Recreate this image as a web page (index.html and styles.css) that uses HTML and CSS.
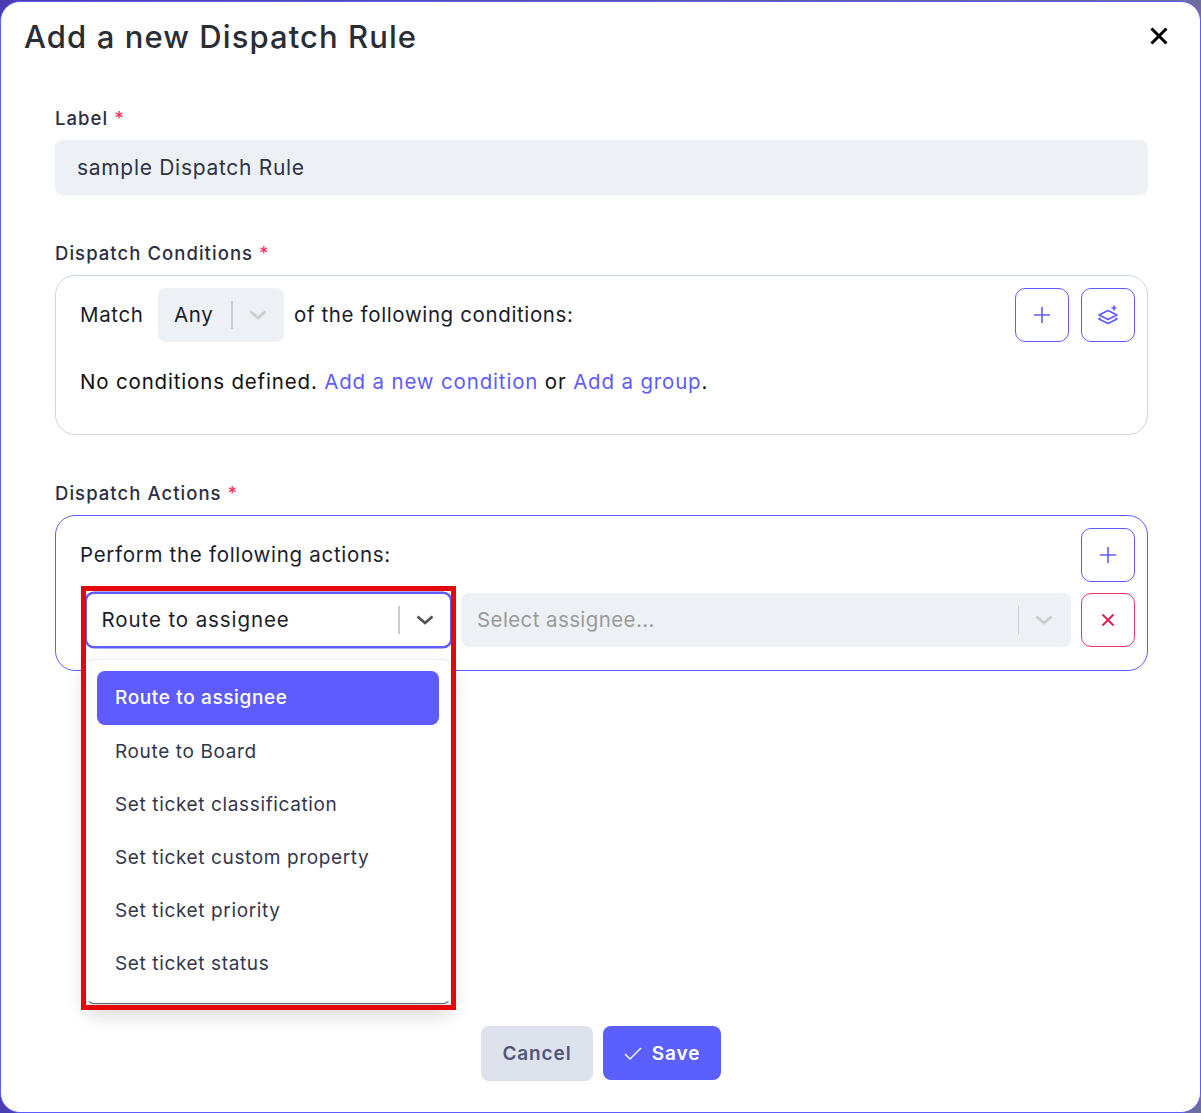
FILE: index.html
```html
<!DOCTYPE html>
<html lang="en">
<head>
<meta charset="utf-8">
<title>Add a new Dispatch Rule</title>
<link rel="stylesheet" href="styles.css">
</head>
<body>
<div class="modal">
  <header class="modal-head">
    <h1 class="title">Add a new Dispatch Rule</h1>
    <button class="close" aria-label="Close">
      <svg width="18" height="18" viewBox="0 0 18 18"><path d="M1.5 1.5l15 15M16.5 1.5l-15 15" stroke="#000" stroke-width="3" fill="none"/></svg>
    </button>
  </header>
  <div class="modal-body">
    <section class="field field-label">
      <div class="label">Label <span class="req">*</span></div>
      <div class="input">sample Dispatch Rule</div>
    </section>
    <section class="field field-cond">
      <div class="label">Dispatch Conditions <span class="req">*</span></div>
      <div class="box box-cond">
        <div class="row-head">
          <span class="match">Match</span>
          <div class="select select-any">
            <span class="sel-text">Any</span>
            <i class="sep"></i>
            <svg class="chev" width="18" height="10" viewBox="0 0 18 10"><path d="M1.5 1.5L9 8l7.5-6.5" stroke="#cccccc" stroke-width="2.8" fill="none"/></svg>
          </div>
          <span class="of">of the following conditions:</span>
          <div class="tools">
            <button class="icon-btn">
              <svg width="16" height="16" viewBox="0 0 16 16"><path d="M8 0v16M0 8h16" stroke="#5f5cff" stroke-width="1.6" fill="none"/></svg>
            </button>
            <button class="icon-btn">
              <svg width="22" height="22" viewBox="0 0 22 22" fill="none" stroke="#5f5cff" stroke-width="1.7" stroke-linejoin="round"><path d="M11 6.5L20 11l-9 4.5L2 11z"/><path d="M3.5 14L2 15l9 4.5 9-4.5-1.5-1"/><path d="M17 1.5v5M14.5 4h5"/></svg>
            </button>
          </div>
        </div>
        <p class="empty">No conditions defined. <a href="#">Add a new condition</a> or <a href="#">Add a group</a>.</p>
      </div>
    </section>
    <section class="field field-act">
      <div class="label">Dispatch Actions <span class="req">*</span></div>
      <div class="box box-act">
        <div class="row-perform">
          <span class="perform">Perform the following actions:</span>
          <button class="icon-btn">
            <svg width="16" height="16" viewBox="0 0 16 16"><path d="M8 0v16M0 8h16" stroke="#5f5cff" stroke-width="1.6" fill="none"/></svg>
          </button>
        </div>
        <div class="row-action">
          <div class="combo">
            <div class="select select-open">
              <span class="sel-text">Route to assignee</span>
              <i class="sep"></i>
              <svg class="chev" width="18" height="10" viewBox="0 0 18 10"><path d="M1.5 1.5L9 8l7.5-6.5" stroke="#555555" stroke-width="2.8" fill="none"/></svg>
            </div>
            <ul class="menu">
              <li class="opt active">Route to assignee</li>
              <li class="opt">Route to Board</li>
              <li class="opt">Set ticket classification</li>
              <li class="opt">Set ticket custom property</li>
              <li class="opt">Set ticket priority</li>
              <li class="opt">Set ticket status</li>
            </ul>
            <div class="highlight"></div>
          </div>
          <div class="select select-assignee">
            <span class="sel-text placeholder">Select assignee...</span>
            <i class="sep"></i>
            <svg class="chev" width="18" height="10" viewBox="0 0 18 10"><path d="M1.5 1.5L9 8l7.5-6.5" stroke="#cccccc" stroke-width="2.8" fill="none"/></svg>
          </div>
          <button class="icon-btn danger">
            <svg width="14" height="14" viewBox="0 0 14 14"><path d="M1.5 1.5l11 11M12.5 1.5l-11 11" stroke="#e0194f" stroke-width="1.8" fill="none"/></svg>
          </button>
        </div>
      </div>
    </section>
  </div>
  <footer class="modal-foot">
    <button class="btn btn-cancel">Cancel</button>
    <button class="btn btn-save">
      <svg width="18" height="13" viewBox="0 0 18 13"><path d="M1 7l5 5L17 1" stroke="#fff" stroke-width="1.4" fill="none"/></svg>
      Save
    </button>
  </footer>
</div>
</body>
</html>
```
FILE: styles.css
```css
* { box-sizing: border-box; }
html, body { margin: 0; padding: 0; }
body {
  width: 1201px;
  height: 1113px;
  overflow: hidden;
  background: linear-gradient(90deg, #4a3db4 0%, #5c55a8 50%, #6d6c9c 100%);
  font-family: Inter, "Noto Sans", sans-serif;
  color: #2a2d3e;
}
.modal {
  height: 1112px;
  margin-top: 1px;
  background: #fff;
  border: 1px solid #5f5cff;
  border-radius: 20px;
  display: flex;
  flex-direction: column;
}
.modal-head {
  height: 68px;
  display: flex;
  align-items: center;
  justify-content: space-between;
  padding: 0 32px 0 23px;
}
.title {
  margin: 0;
  font-size: 31px;
  font-weight: 450;
  letter-spacing: 1.08px;
  color: #2a2d34;
}
.close {
  border: 0;
  background: none;
  padding: 0;
  display: flex;
}
.modal-body {
  flex: 1;
  padding: 36px 52px 0 54px;
}
.field { display: flex; flex-direction: column; }
.label {
  font-size: 18.5px;
  line-height: 24px;
  font-weight: 450;
  letter-spacing: 1.05px;
  height: 34px;
  color: #2c2e42;
}
.req { color: #f5356a; }
.input {
  height: 55px;
  background: #edf1f5;
  border-radius: 8px;
  padding: 0 22px;
  display: flex;
  align-items: center;
  font-size: 21px;
  letter-spacing: 0.7px;
  color: #2f3247;
}
.field-cond { margin-top: 46px; }
.field-act { margin-top: 46px; }
.box {
  border: 1px solid #ccd5de;
  border-radius: 20px;
  font-size: 20.5px;
  letter-spacing: 0.63px;
  color: #1b1d2b;
}
.box-cond { height: 160px; padding: 12px 12px 0 24px; }
.box-act { height: 156px; padding: 12px 12px 0 24px; border-color: #5f5cff; }
.row-head { display: flex; align-items: center; height: 54px; }
.match { width: 78px; flex: none; margin-top: -1px; }
.select {
  display: flex;
  align-items: center;
  height: 54px;
  background: #edf1f5;
  border-radius: 8px;
}
.sel-text { margin-top: -1px; }
.select-any { width: 126px; padding-left: 16px; }
.select-any .sel-text { width: 57px; }
.sep { display: block; width: 1.5px; height: 28px; background: #cccccc; flex: none; }
.chev { flex: none; margin-left: 16px; }
.of { margin-left: 10px; margin-top: -1px; }
.tools { margin-left: auto; display: flex; gap: 12px; }
.icon-btn {
  width: 54px;
  height: 54px;
  padding: 0;
  background: #fff;
  border: 1.2px solid #5f5cff;
  border-radius: 10px;
  display: flex;
  align-items: center;
  justify-content: center;
  flex: none;
}
.icon-btn.danger { border-color: #f0305e; }
.empty { margin: 13px 0 0; line-height: 54px; height: 54px; font-weight: 400; letter-spacing: 0.83px; color: #111; }
.empty a { color: #5f5cff; text-decoration: none; }
.row-perform { display: flex; align-items: center; justify-content: space-between; height: 54px; }
.perform { margin-top: -1px; letter-spacing: 0.7px; }
.row-action { display: flex; margin-top: 11px; margin-left: 6px; }
.combo { position: relative; width: 365px; flex: none; }
.select-open {
  background: #fff;
  border: 1.5px solid #5f5cff;
  box-shadow: 0 0 0 1.5px #5f5cff;
  padding-left: 14.5px;
}
.select-open .sel-text { flex: 1; letter-spacing: 0.9px; }
.select-open .chev { margin: 0 16.5px 0 16px; }
.menu {
  position: absolute;
  left: 0;
  right: 0;
  top: 66px;
  height: 345px;
  margin: 0;
  padding: 11px 11px 11px 10px;
  list-style: none;
  background: #fff;
  border: 1px solid #edf1f7;
  border-bottom: 1px solid #5d616b;
  border-radius: 8px;
  box-shadow: 0 10px 20px rgba(40, 40, 60, 0.2);
  font-size: 19px;
  color: #33364d;
}
.opt { height: 53.2px; display: flex; align-items: center; padding: 0 0 1px 18px; }
.opt.active {
  height: 54px;
  background: #5f5cff;
  color: #fff;
  border-radius: 8px;
  font-weight: 500;
}
.highlight {
  position: absolute;
  left: -5px;
  right: -5px;
  top: -7px;
  height: 424px;
  border: 5px solid #e60808;
  pointer-events: none;
}
.select-assignee { width: 610px; margin-left: 10px; padding-left: 16px; }
.select-assignee .sel-text { flex: 1; }
.select-assignee .chev { margin: 0 18px 0 16px; }
.placeholder { color: #9a9a9a; letter-spacing: 0.4px; }
.danger { margin-left: 10px; }
.modal-foot {
  height: 86px;
  display: flex;
  gap: 10px;
  padding: 0 0 0 480px;
  align-items: flex-start;
}
.btn {
  height: 54px;
  border: 0;
  border-radius: 8px;
  font-family: inherit;
  font-size: 19px;
  font-weight: 600;
  letter-spacing: 0.9px;
  display: flex;
  align-items: center;
  justify-content: center;
  gap: 10px;
}
.btn-cancel { width: 112px; height: 55px; background: #dde2ec; color: #52567a; }
.btn-save { width: 118px; background: #5b5ffc; color: #fff; }
```
